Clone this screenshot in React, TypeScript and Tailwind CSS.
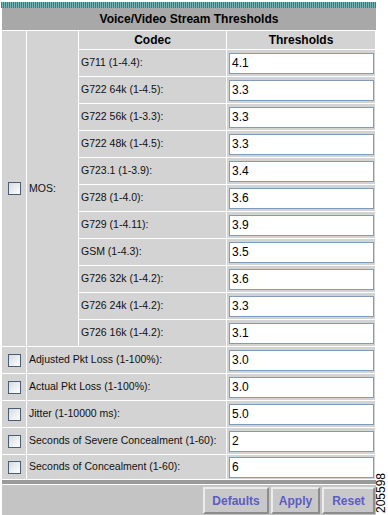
const codecs: { label: string; value: string }[] = [
  { label: "G711 (1-4.4):", value: "4.1" },
  { label: "G722 64k (1-4.5):", value: "3.3" },
  { label: "G722 56k (1-3.3):", value: "3.3" },
  { label: "G722 48k (1-4.5):", value: "3.3" },
  { label: "G723.1 (1-3.9):", value: "3.4" },
  { label: "G728 (1-4.0):", value: "3.6" },
  { label: "G729 (1-4.11):", value: "3.9" },
  { label: "GSM (1-4.3):", value: "3.5" },
  { label: "G726 32k (1-4.2):", value: "3.6" },
  { label: "G726 24k (1-4.2):", value: "3.3" },
  { label: "G726 16k (1-4.2):", value: "3.1" },
];

const others: { label: string; value: string }[] = [
  { label: "Adjusted Pkt Loss (1-100%):", value: "3.0" },
  { label: "Actual Pkt Loss (1-100%):", value: "3.0" },
  { label: "Jitter (1-10000 ms):", value: "5.0" },
  { label: "Seconds of Severe Concealment (1-60):", value: "2" },
  { label: "Seconds of Concealment (1-60):", value: "6" },
];

function Checkbox() {
  return (
    <span className="block w-[13px] h-[13px] border border-[#4a5d73] bg-gradient-to-br from-[#d6dbe2] to-white" />
  );
}

function Field({ value }: { value: string }) {
  return (
    <div className="bg-[#d3d3d3] flex items-center pl-[2px] pr-px">
      <div className="w-full h-[21px] bg-white border border-[#7f9db9] pl-[2px] text-[12px] leading-[19px] text-black">
        {value}
      </div>
    </div>
  );
}

function Button({ label, w }: { label: string; w: string }) {
  return (
    <div
      className={`${w} h-[27px] flex items-center justify-center bg-[#c8c8c8] border-2 border-t-[#ececec] border-l-[#ececec] border-b-[#8c8c8c] border-r-[#8c8c8c] text-[12px] font-bold text-[#5c5cc4]`}
    >
      {label}
    </div>
  );
}

export default function App() {
  return (
    <div className="w-[388px] h-[515px] bg-white relative font-['Liberation_Sans',Arial,sans-serif] text-[10.5px] text-[#111] overflow-hidden">
      <div className="ml-px w-[375px] pt-[2px]">
        {/* striped top edge */}
        <div className="h-[6px] bg-[repeating-linear-gradient(90deg,#2c8585_0px,#2c8585_1px,#74b6b6_1px,#74b6b6_2px)]" />
        <div className="pl-px bg-white">
          <div className="h-[22px] bg-[#a8a8a8] flex items-center justify-center text-[12px] font-bold text-black">
            Voice/Video Stream Thresholds
          </div>
          <div className="mt-px grid grid-cols-[24px_51px_147px_148px] grid-rows-[18px_repeat(15,26px)_24px] gap-px bg-white">
            <div className="row-span-12 bg-[#d3d3d3] flex items-center justify-center">
              <Checkbox />
            </div>
            <div className="row-span-12 bg-[#d3d3d3] flex items-center pl-[2px]">MOS:</div>
            <div className="bg-[#d3d3d3] flex items-center justify-center text-[12px] font-bold text-black">Codec</div>
            <div className="bg-[#d3d3d3] flex items-center justify-center text-[12px] font-bold text-black">Thresholds</div>
            {codecs.map((c) => (
              <>
                <div key={c.label} className="bg-[#d3d3d3] flex items-center pl-[2px]">
                  {c.label}
                </div>
                <Field key={c.label + "v"} value={c.value} />
              </>
            ))}
            {others.map((o) => (
              <>
                <div key={o.label + "c"} className="bg-[#d3d3d3] flex items-center justify-center">
                  <Checkbox />
                </div>
                <div key={o.label} className="col-span-2 bg-[#d3d3d3] flex items-center pl-[2px]">
                  {o.label}
                </div>
                <Field key={o.label + "v"} value={o.value} />
              </>
            ))}
          </div>
          <div className="mt-px h-[4px] bg-[#9a9a9a]" />
          <div className="mt-px h-[31px] bg-[#c4c4c4] flex justify-end items-start pt-[2px] pr-px gap-[2px]">
            <Button label="Defaults" w="w-[66px]" />
            <Button label="Apply" w="w-[49px]" />
            <Button label="Reset" w="w-[53px]" />
          </div>
        </div>
      </div>
      <div className="absolute left-[375px] top-[513px] origin-top-left -rotate-90 text-[12px] leading-[13px] whitespace-nowrap text-black">
        205598
      </div>
    </div>
  );
}
